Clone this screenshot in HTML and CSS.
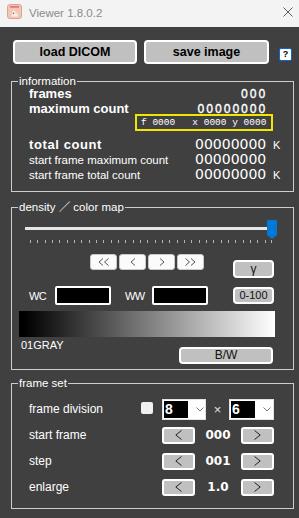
FILE: index.html
```html
<!DOCTYPE html>
<html>
<head>
<meta charset="utf-8">
<title>Viewer 1.8.0.2</title>
<link rel="stylesheet" href="styles.css">
</head>
<body>
<div class="titlebar">
  <svg class="app-icon" width="15" height="15" viewBox="0 0 15 15">
    <rect x="0.5" y="0.5" width="14" height="14" rx="2.5" fill="#f2c7bb" stroke="#d9a396"/>
    <rect x="3" y="2.3" width="9" height="1.2" fill="#e0504a"/>
    <path d="M4.5 12.5 L5.5 8 L7 5.5 L8.2 8 L10.5 10 L11 12.5 Z" fill="#f8ebe0"/>
    <circle cx="6.6" cy="9.3" r="0.7" fill="#7a5a4a"/>
  </svg>
  <span class="title">Viewer 1.8.0.2</span>
  <svg class="close" width="10" height="10" viewBox="0 0 10 10">
    <path d="M0.5 0.5 L9.5 9.5 M9.5 0.5 L0.5 9.5" stroke="#5a5a5a" stroke-width="1" fill="none"/>
  </svg>
</div>

<div class="content">
  <div class="toprow">
    <button class="btn-main btn-load">load DICOM</button>
    <button class="btn-main btn-save">save image</button>
    <span class="help">?</span>
  </div>

  <fieldset class="group info">
    <legend>information</legend>
    <div class="irow r-frames"><span class="lbl-b">frames</span><span class="val-b">000</span><span></span></div>
    <div class="irow r-max"><span class="lbl-b">maximum count</span><span class="val-b">00000000</span><span></span></div>
    <div class="coords">f 0000   x 0000 y 0000</div>
    <div class="irow r-total"><span class="lbl-b lbl-total">total count</span><span class="val">00000000</span><span class="unit">K</span></div>
    <div class="irow r-sm"><span class="lbl">start frame maximum count</span><span class="val">00000000</span><span></span></div>
    <div class="irow r-sm"><span class="lbl">start frame total count</span><span class="val">00000000</span><span class="unit">K</span></div>
  </fieldset>

  <fieldset class="group density">
    <legend>density ／ color map</legend>
    <svg class="slider" width="260" height="25" viewBox="0 0 260 25" shape-rendering="crispEdges">
      <rect x="3" y="7.5" width="245" height="3" fill="#e6e6e6"/>
      <path d="M8.5 21v3M15.5 21v3M23.5 21v3M30.5 21v3M37.5 21v3M45.5 21v3M52.5 21v3M59.5 21v3M67.5 21v3M74.5 21v3M81.5 21v3M89.5 21v3M96.5 21v3M103.5 21v3M111.5 21v3M118.5 21v3M125.5 21v3M133.5 21v3M140.5 21v3M147.5 21v3M155.5 21v3M162.5 21v3M169.5 21v3M177.5 21v3M184.5 21v3M191.5 21v3M199.5 21v3M206.5 21v3M213.5 21v3M221.5 21v3M228.5 21v3M235.5 21v3M243.5 21v3M249.5 21v3" stroke="#b4b4b4" stroke-width="1"/>
      <path d="M245 2 Q245 1 246 1 H254 Q255 1 255 2 V16 L250 20 L245 16 Z" fill="#0078d7" shape-rendering="auto"/>
    </svg>
    <div class="navrow">
      <div class="navgroup">
        <span class="navbtn"><svg width="11" height="8" viewBox="0 0 11 8"><path d="M5 0.5 L1 4 L5 7.5 M10.5 0.5 L6.5 4 L10.5 7.5" stroke="#555" fill="none"/></svg></span>
        <span class="navbtn"><svg width="6" height="8" viewBox="0 0 6 8"><path d="M5 0.5 L1 4 L5 7.5" stroke="#555" fill="none"/></svg></span>
        <span class="navbtn"><svg width="6" height="8" viewBox="0 0 6 8"><path d="M1 0.5 L5 4 L1 7.5" stroke="#555" fill="none"/></svg></span>
        <span class="navbtn"><svg width="11" height="8" viewBox="0 0 11 8"><path d="M0.5 0.5 L4.5 4 L0.5 7.5 M6 0.5 L10 4 L6 7.5" stroke="#555" fill="none"/></svg></span>
      </div>
      <button class="btn-gray btn-gamma">γ</button>
    </div>
    <div class="wcrow">
      <span class="wlbl wlbl-wc">WC</span>
      <span class="field"></span>
      <span class="wlbl wlbl-ww">WW</span>
      <span class="field"></span>
      <button class="btn-gray btn-range">0-100</button>
    </div>
    <div class="gradient"></div>
    <div class="cmrow">
      <span class="cmname">01GRAY</span>
      <button class="btn-gray btn-bw">B/W</button>
    </div>
  </fieldset>

  <fieldset class="group frameset">
    <legend>frame set</legend>
    <div class="frow first">
      <span class="flbl flbl-div">frame division</span>
      <span class="check"></span>
      <span class="select"><span class="sel-val">8</span><svg class="chev" width="8" height="5" viewBox="0 0 8 5"><path d="M0.5 0.5 L4 4 L7.5 0.5" stroke="#7a7a7a" fill="none"/></svg></span>
      <span class="times">×</span>
      <span class="select select2"><span class="sel-val">6</span><svg class="chev" width="8" height="5" viewBox="0 0 8 5"><path d="M0.5 0.5 L4 4 L7.5 0.5" stroke="#7a7a7a" fill="none"/></svg></span>
    </div>
    <div class="frow">
      <span class="flbl">start frame</span>
      <button class="sbtn"><svg width="7" height="10" viewBox="0 0 7 10"><path d="M6.5 0.5 L0.8 5 L6.5 9.5" stroke="#222" fill="none"/></svg></button>
      <span class="sval">000</span>
      <button class="sbtn"><svg width="7" height="10" viewBox="0 0 7 10"><path d="M0.5 0.5 L6.2 5 L0.5 9.5" stroke="#222" fill="none"/></svg></button>
    </div>
    <div class="frow">
      <span class="flbl">step</span>
      <button class="sbtn"><svg width="7" height="10" viewBox="0 0 7 10"><path d="M6.5 0.5 L0.8 5 L6.5 9.5" stroke="#222" fill="none"/></svg></button>
      <span class="sval">001</span>
      <button class="sbtn"><svg width="7" height="10" viewBox="0 0 7 10"><path d="M0.5 0.5 L6.2 5 L0.5 9.5" stroke="#222" fill="none"/></svg></button>
    </div>
    <div class="frow">
      <span class="flbl">enlarge</span>
      <button class="sbtn"><svg width="7" height="10" viewBox="0 0 7 10"><path d="M6.5 0.5 L0.8 5 L6.5 9.5" stroke="#222" fill="none"/></svg></button>
      <span class="sval">1.0</span>
      <button class="sbtn"><svg width="7" height="10" viewBox="0 0 7 10"><path d="M0.5 0.5 L6.2 5 L0.5 9.5" stroke="#222" fill="none"/></svg></button>
    </div>
  </fieldset>
</div>
</body>
</html>
```

FILE: styles.css
```css
* { box-sizing: border-box; }
html, body { margin: 0; padding: 0; }
body {
  width: 299px;
  height: 518px;
  overflow: hidden;
  background: #404040;
  font-family: "Liberation Sans", "Noto Sans CJK JP", sans-serif;
  color: #fff;
}
button {
  font-family: inherit;
  padding: 0;
  margin: 0;
  color: #111;
  cursor: default;
}

/* title bar */
.titlebar {
  height: 27px;
  background: #f3f3f3;
  display: flex;
  align-items: flex-start;
}
.app-icon { flex: none; margin: 4px 0 0 7px; }
.title {
  margin: 6px 0 0 7px;
  font-size: 11.5px;
  line-height: 14px;
  color: #8b8b8b;
}
.close { flex: none; margin: 7px 6px 0 auto; }

/* content */
.content { padding: 13px 5px 0 11px; }

.toprow {
  display: flex;
  align-items: flex-start;
  height: 24px;
  padding-left: 2px;
}
.btn-main {
  height: 24px;
  background: #c0c0c0;
  border: 2px solid #fff;
  border-radius: 4px;
  font-weight: bold;
  font-size: 12.5px;
  line-height: 20px;
  color: #000;
}
.btn-load { width: 124px; }
.btn-save { width: 125px; margin-left: 7px; }
.help {
  width: 13px;
  height: 13px;
  margin: 8px 0 0 10px;
  border: 1.5px solid #0a66d8;
  border-radius: 2px;
  background: #fff;
  color: #000;
  font-weight: bold;
  font-size: 9px;
  line-height: 10px;
  text-align: center;
}

/* groups */
.group {
  margin: 11px 0 0;
  padding: 0 0 9px 6px;
  border: 1px solid #cdcdcd;
  min-width: 0;
}
.group legend {
  padding: 0 1px;
  font-size: 11.5px;
  line-height: 12px;
  color: #fff;
}

/* information */
.irow {
  display: grid;
  grid-template-columns: 166px 72px 1fr;
  align-items: baseline;
  padding-left: 11px;
}
.r-frames { height: 15px; }
.r-max { height: 12px; }
.r-total { margin-top: 6px; height: 15px; }
.r-sm { height: 15px; }
.lbl-b { font-weight: bold; font-size: 13px; line-height: 14px; }
.lbl-total { font-size: 13px; letter-spacing: 0.6px; line-height: 15px; }
.lbl { font-size: 11.5px; line-height: 15px; }
.val-b {
  font-family: "DejaVu Sans", sans-serif;
  font-size: 11.5px;
  line-height: 14px;
  letter-spacing: 1.4px;
  text-align: right;
  -webkit-text-stroke: 0.3px #fff;
}
.val {
  font-family: "DejaVu Sans", sans-serif;
  font-size: 14px;
  line-height: 15px;
}
.unit { padding-left: 6px; font-size: 11px; }
.coords {
  margin-left: 117px;
  width: 138px;
  height: 17px;
  border: 2px solid #f2e600;
  padding-left: 4px;
  font-family: "Liberation Mono", monospace;
  font-size: 9.5px;
  line-height: 13px;
  white-space: pre;
}

/* density */
.density { margin-top: 9px; padding-bottom: 5px; }
.slider { display: block; margin: 6px 0 0 4px; }
.navrow {
  display: flex;
  align-items: flex-start;
  height: 24px;
  margin-top: 10px;
  padding-left: 72px;
}
.navgroup { display: flex; gap: 2px; }
.navbtn {
  width: 27px;
  height: 16px;
  background: #fbfbfb;
  border: 1px solid #c9c9c9;
  border-radius: 3px;
  display: flex;
  align-items: center;
  justify-content: center;
}
.btn-gray {
  background: #c0c0c0;
  border: 2px solid #fff;
  border-radius: 4px;
  color: #111;
  font-size: 12px;
}
.btn-gamma { width: 41px; height: 18px; margin: 6px 0 0 29px; line-height: 14px; }
.wcrow {
  display: flex;
  align-items: center;
  height: 19px;
  margin-top: 8px;
  padding-left: 11px;
}
.wlbl { font-size: 11px; letter-spacing: -0.6px; line-height: 14px; }
.wlbl-wc { width: 26px; }
.wlbl-ww { width: 27px; margin-left: 14px; }
.field {
  width: 56px;
  height: 19px;
  background: #000;
  border: 2px solid #fff;
  border-radius: 2px;
}
.btn-range {
  width: 41px;
  height: 17px;
  margin-left: 25px;
  font-size: 11px;
  line-height: 13px;
}
.gradient {
  width: 256px;
  height: 26px;
  margin: 6px 0 0 1px;
  background: linear-gradient(to right, #000 2%, #fff 100%);
}
.cmrow { display: flex; align-items: flex-start; }
.cmname { margin-left: 3px; font-size: 11px; line-height: 16px; }
.btn-bw {
  width: 94px;
  height: 17px;
  margin: 10px 20px 0 auto;
  font-size: 12px;
  line-height: 13px;
}

/* frame set */
.frameset { margin-top: 7px; padding-bottom: 8px; }
.frow {
  display: flex;
  align-items: center;
  height: 26px;
  padding-left: 11px;
}
.frow.first { margin-top: 7px; }
.flbl { width: 133px; font-size: 12px; }
.flbl-div { width: 112px; }
.check {
  width: 12px;
  height: 12px;
  margin: -2px 9px 0 0;
  background: #f0f0f0;
  border-radius: 2px;
}
.select {
  width: 44px;
  height: 21px;
  background: #fff;
  border: 1px solid #e2e2e2;
  padding: 1px;
  display: flex;
  align-items: center;
}
.select2 { width: 45px; }
.sel-val {
  width: 24px;
  height: 17px;
  background: #000;
  color: #fff;
  font-weight: bold;
  font-size: 14px;
  line-height: 17px;
  padding-left: 1px;
}
.chev { margin-left: 8px; }
.times {
  width: 23px;
  text-align: center;
  font-size: 13px;
  color: #e0e0e0;
}
.sbtn {
  width: 33px;
  height: 17px;
  background: #c0c0c0;
  border: 2px solid #fff;
  border-radius: 3px;
  display: flex;
  align-items: center;
  justify-content: center;
}
.sval {
  width: 46px;
  text-align: center;
  font-family: "DejaVu Sans", sans-serif;
  font-weight: bold;
  font-size: 12px;
}
```
